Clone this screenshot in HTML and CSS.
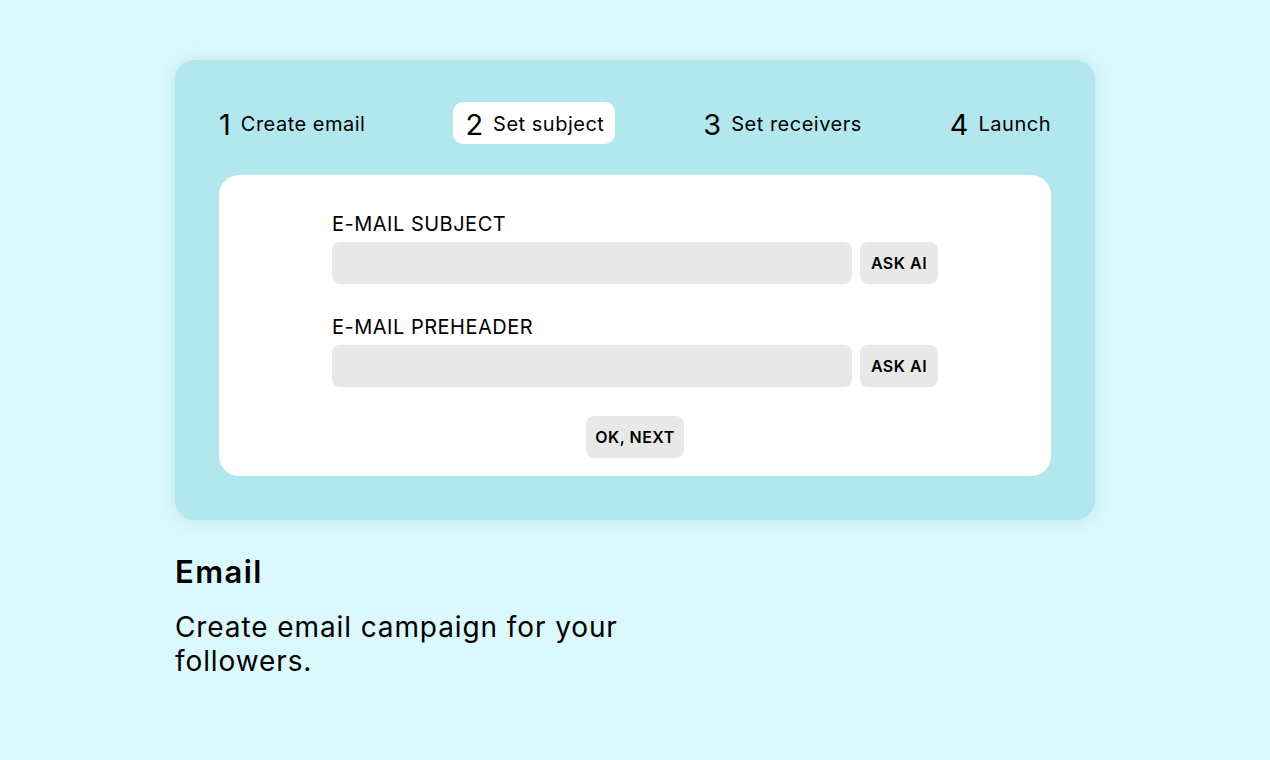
FILE: index.html
```html
<!DOCTYPE html>
<html lang="en">
<head>
<meta charset="utf-8">
<title>Email</title>
<link rel="stylesheet" href="styles.css">
</head>
<body>
<main class="page">
  <section class="card">
    <nav class="steps">
      <div class="step"><span class="num">1</span><span class="label">Create email</span></div>
      <div class="step active"><span class="num">2</span><span class="label">Set subject</span></div>
      <div class="step"><span class="num">3</span><span class="label">Set receivers</span></div>
      <div class="step"><span class="num">4</span><span class="label">Launch</span></div>
    </nav>
    <div class="panel">
      <div class="form">
        <div class="field">
          <div class="field-label">E-MAIL SUBJECT</div>
          <div class="field-row">
            <div class="input"></div>
            <button class="btn">ASK AI</button>
          </div>
        </div>
        <div class="field">
          <div class="field-label">E-MAIL PREHEADER</div>
          <div class="field-row">
            <div class="input"></div>
            <button class="btn">ASK AI</button>
          </div>
        </div>
        <div class="actions">
          <button class="btn next">OK, NEXT</button>
        </div>
      </div>
    </div>
  </section>
  <h1 class="title">Email</h1>
  <p class="desc">Create email campaign for your followers.</p>
</main>
</body>
</html>
```
FILE: styles.css
```css
html, body {
  margin: 0;
  padding: 0;
}
body {
  background: #dbf8fc;
  font-family: Inter, "Noto Sans", sans-serif;
  color: #000;
  width: 1270px;
  height: 760px;
  overflow: hidden;
}
.page {
  padding: 60px 0 0 175px;
}
.card {
  width: 920px;
  box-sizing: border-box;
  background: #b2e8ed;
  border-radius: 20px;
  padding: 42px 44px 44px;
  box-shadow: 0 0 14px rgba(120, 200, 210, 0.35);
}
.steps {
  display: flex;
  justify-content: space-between;
  align-items: center;
  height: 42px;
}
.step {
  display: flex;
  align-items: center;
  gap: 10px;
  height: 42px;
  border-radius: 10px;
  box-sizing: border-box;
}
.step.active {
  background: #fff;
  padding: 0 11px 0 12px;
}
.num {
  font-size: 29px;
  font-weight: 400;
  line-height: 1;
  position: relative;
  top: 1px;
}
.label {
  font-size: 20px;
  line-height: 24px;
  letter-spacing: 0.5px;
  position: relative;
  top: 1px;
}
.panel {
  margin-top: 31px;
  background: #fff;
  border-radius: 20px;
  padding: 37px 0 18px;
  display: flex;
  justify-content: center;
}
.form {
  width: 606px;
  display: flex;
  flex-direction: column;
}
.field + .field {
  margin-top: 31px;
}
.field-label {
  font-size: 20px;
  line-height: 24px;
  margin-bottom: 6px;
  letter-spacing: 0.5px;
}
.field-row {
  display: flex;
  gap: 8px;
}
.input {
  flex: 1;
  height: 42px;
  background: #e8e8e8;
  border-radius: 8px;
}
.btn {
  height: 42px;
  border: 0;
  border-radius: 8px;
  background: #e8e8e8;
  font-family: Inter, "Noto Sans", sans-serif;
  font-weight: 600;
  font-size: 16px;
  letter-spacing: 0.5px;
  color: #000;
  padding: 0;
  width: 78px;
}
.actions {
  display: flex;
  justify-content: center;
  margin-top: 29px;
}
.btn.next {
  width: 98px;
}
.title {
  margin: 34px 0 0;
  font-size: 31px;
  line-height: 36px;
  font-weight: 600;
  letter-spacing: 1.4px;
}
.desc {
  margin: 20px 0 0;
  font-size: 28px;
  line-height: 34px;
  letter-spacing: 0.9px;
  width: 480px;
}
```
